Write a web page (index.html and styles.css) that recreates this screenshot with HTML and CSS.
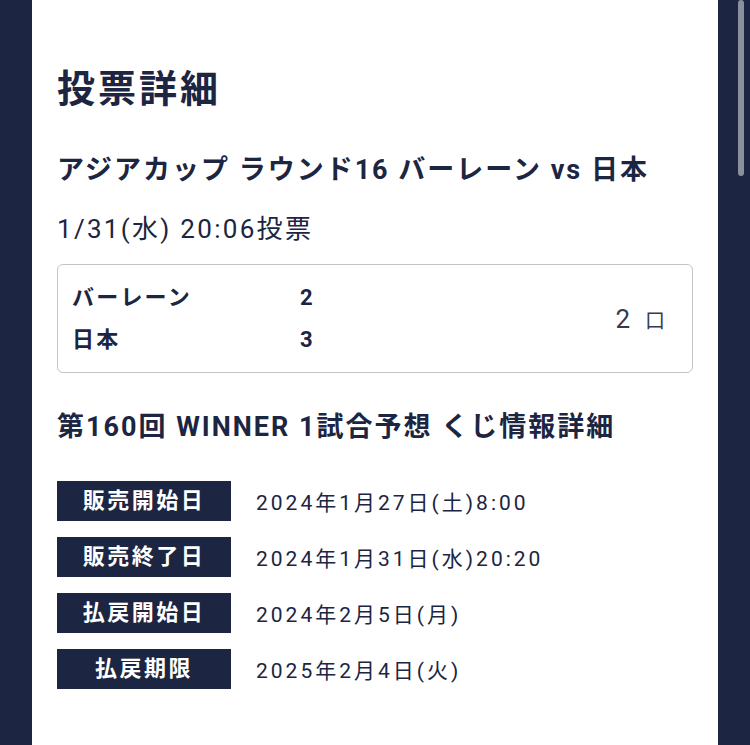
FILE: index.html
```html
<!DOCTYPE html>
<html lang="ja">
<head>
    <meta charset="UTF-8">
    <meta name="viewport" content="width=device-width, initial-scale=1.0">
    <title>投票詳細</title>
    <link rel="stylesheet" href="styles.css">
</head>
<body>
    <div class="panel">
        <h1 class="page-title">投票詳細</h1>
        <h2 class="match-title">アジアカップ ラウンド16 バーレーン vs 日本</h2>
        <p class="vote-time">1/31(水) 20:06投票</p>

        <div class="vote-box">
            <div class="score-list">
                <div class="score-row">
                    <span class="team">バーレーン</span>
                    <span class="score">2</span>
                </div>
                <div class="score-row">
                    <span class="team">日本</span>
                    <span class="score">3</span>
                </div>
            </div>
            <div class="units">2<span class="unit-label">口</span></div>
        </div>

        <h2 class="lottery-title">第160回 WINNER 1試合予想 くじ情報詳細</h2>

        <dl class="info-table">
            <div class="info-row">
                <dt>販売開始日</dt>
                <dd>2024年1月27日(土)8:00</dd>
            </div>
            <div class="info-row">
                <dt>販売終了日</dt>
                <dd>2024年1月31日(水)20:20</dd>
            </div>
            <div class="info-row">
                <dt>払戻開始日</dt>
                <dd>2024年2月5日(月)</dd>
            </div>
            <div class="info-row">
                <dt>払戻期限</dt>
                <dd>2025年2月4日(火)</dd>
            </div>
        </dl>
    </div>
    <div class="scrollbar"></div>
</body>
</html>
```

FILE: styles.css
```css
body {
    margin: 0;
    background-color: #1c2541;
    font-family: Roboto, "Noto Sans CJK JP", sans-serif;
    color: #1c2541;
    height: 745px;
    overflow: hidden;
}
.panel {
    background-color: white;
    margin-left: 32px;
    width: 686px;
    min-height: 745px;
    box-sizing: border-box;
    padding: 60px 25px 0;
}
.page-title {
    font-size: 38px;
    font-weight: 700;
    letter-spacing: 3px;
    line-height: 58px;
    margin: 0 0 33px;
}
.match-title {
    font-size: 27px;
    font-weight: 700;
    letter-spacing: 2px;
    line-height: 38px;
    margin: 0 0 21px;
}
.vote-time {
    font-size: 26px;
    letter-spacing: 2.3px;
    line-height: 38px;
    margin: 0 0 16px;
}
.vote-box {
    display: flex;
    align-items: center;
    justify-content: space-between;
    border: 1px solid #c4c4c4;
    border-radius: 6px;
    padding: 12px 27px 11px 14px;
}
.score-row {
    display: flex;
    font-size: 22px;
    font-weight: 700;
    letter-spacing: 2.2px;
    line-height: 42px;
}
.team {
    width: 228px;
}
.units {
    font-size: 26px;
    color: #343b4e;
}
.unit-label {
    font-size: 20px;
    margin-left: 15px;
}
.lottery-title {
    font-size: 27px;
    font-weight: 700;
    letter-spacing: 2px;
    line-height: 38px;
    margin: 35px 0 35px;
}
.info-table {
    margin: 0;
}
.info-row {
    display: flex;
    align-items: center;
    margin-bottom: 16px;
}
.info-row dt {
    width: 174px;
    height: 40px;
    line-height: 40px;
    background-color: #1c2541;
    color: white;
    text-align: center;
    font-size: 22px;
    font-weight: 700;
    letter-spacing: 2.5px;
}
.info-row dd {
    margin: 0 0 0 25px;
    font-size: 21px;
    letter-spacing: 3px;
}
.scrollbar {
    position: fixed;
    top: 0;
    left: 738px;
    width: 6px;
    height: 176px;
    border-radius: 3px;
    background-color: #8b8fa0;
}
```
